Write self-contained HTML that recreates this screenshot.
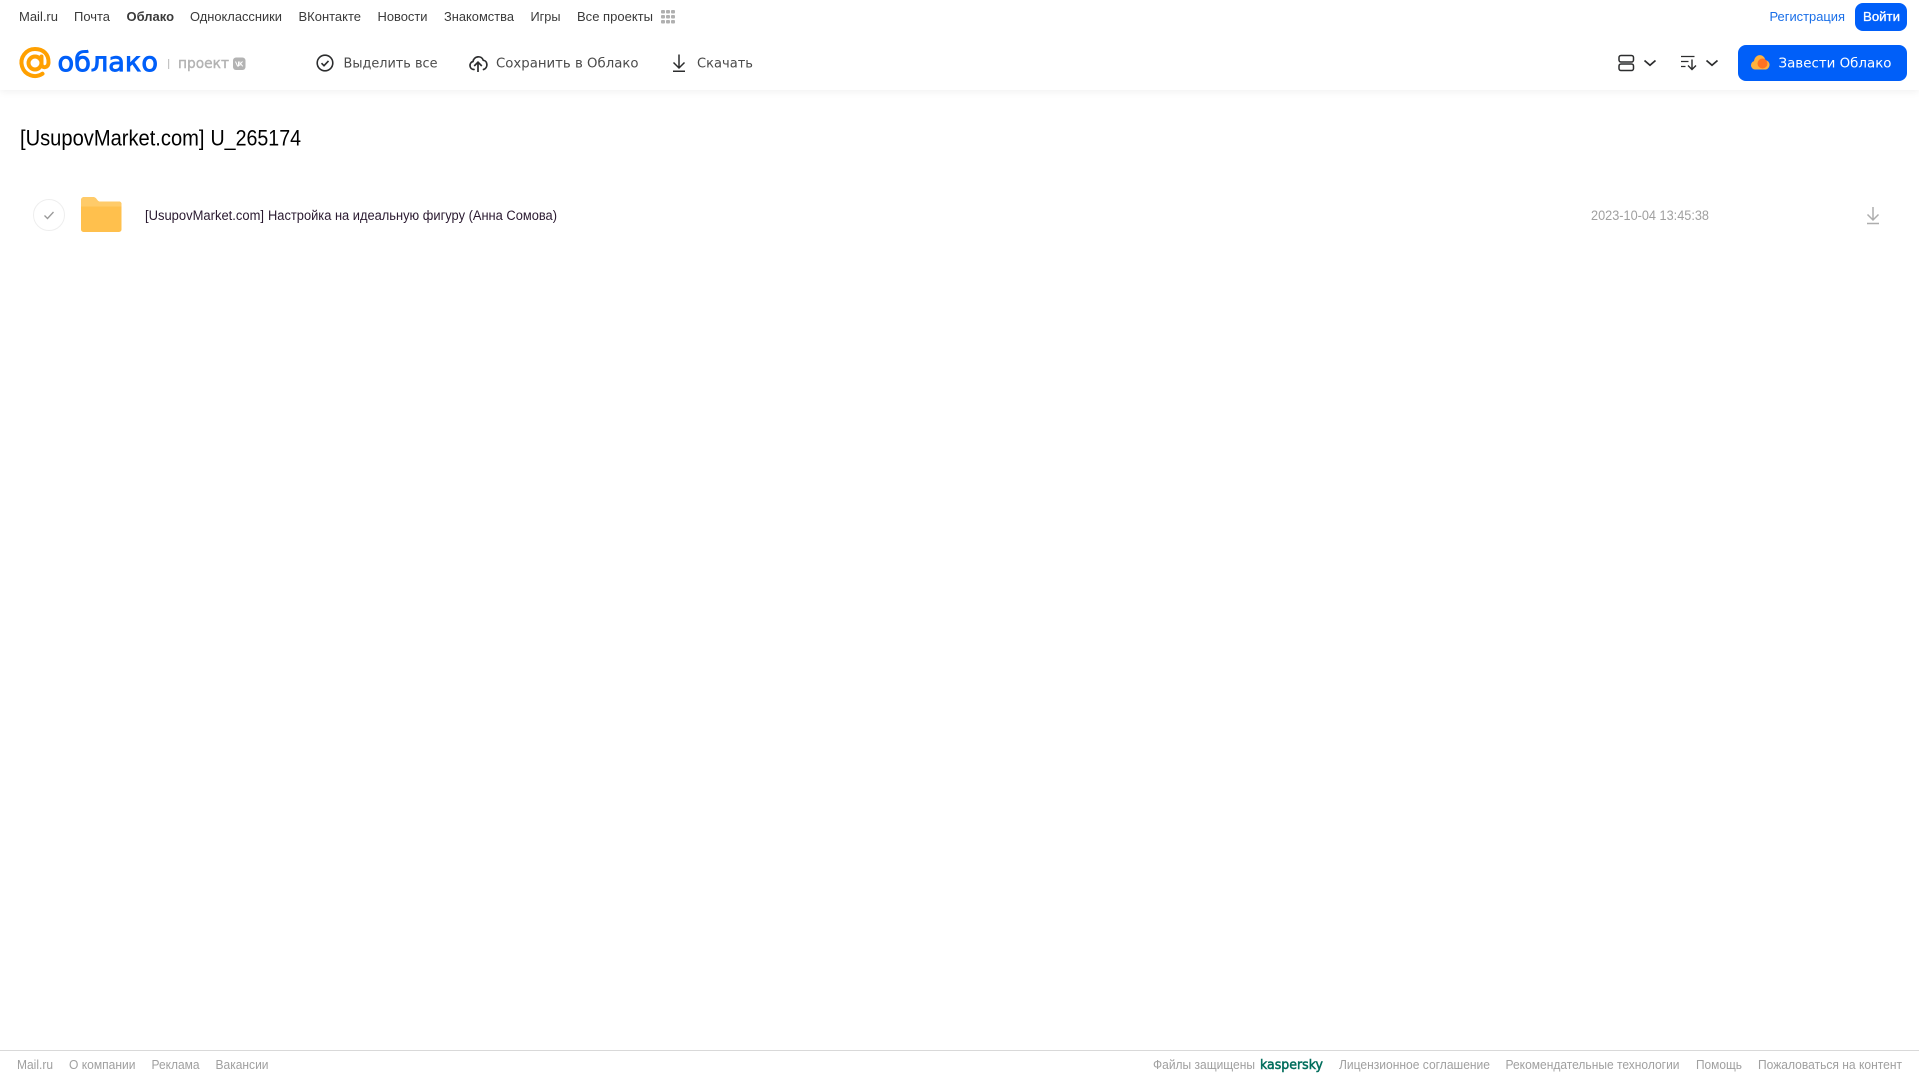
<!DOCTYPE html>
<html lang="ru">
<head>
<meta charset="utf-8">
<title>[UsupovMarket.com] U_265174 - Облако</title>
<style>
html,body{margin:0;padding:0;background:#fff;width:1919px;height:1079px;overflow:hidden}
body{position:relative;font-family:"Liberation Sans",Arial,sans-serif}
svg{display:block;position:absolute;left:0;top:0}
svg text{font-family:"Liberation Sans",Arial,sans-serif}
#hdr{position:absolute;left:0;top:0;width:1919px;height:90px;background:#fff;box-shadow:0 1px 8px rgba(0,0,0,.07)}
#ftr{position:absolute;left:0;top:1050px;width:1919px;height:29px;background:#fff;border-top:1px solid #d9d9d9;box-sizing:border-box}
main{position:absolute;left:0;top:0;width:1919px;height:1079px}
</style>
</head>
<body>
<main>
<svg width="1919" height="1079" viewBox="0 0 1919 1079">
<text x="20" y="145.500" font-size="22.500" fill="#000" textLength="184.500" lengthAdjust="spacingAndGlyphs">[UsupovMarket.com]</text>
<text x="210.500" y="145.500" font-size="22.500" fill="#000" textLength="90.500" lengthAdjust="spacingAndGlyphs">U_265174</text>
<circle cx="49" cy="215" r="15.500" fill="#fff" stroke="#eeeeee"/>
<path d="M44.500 215.500l3 3 6-6.500" fill="none" stroke="#999" stroke-width="1.300"/>
<path d="M81 200a3 3 0 0 1 3-3h8.500c2 0 3 .8 4 2.200l1 1.300c.6.8 1.200 1 2.200 1H119a2.500 2.500 0 0 1 2.500 2.500V229.500a2.500 2.500 0 0 1-2.500 2.500H83.500a2.500 2.500 0 0 1-2.500-2.500z" fill="#ffc04d"/>
<path d="M81 206.500h40.500v-2.500a2.500 2.500 0 0 0-2.500-2.500H100c-1 0-1.600-.2-2.200-1l-1-1.300c-1-1.400-2-2.200-4-2.200H84a3 3 0 0 0-3 3z" fill="#ffcb69"/>
<text x="145" y="220" font-size="13.500" fill="#2a1a30" textLength="119" lengthAdjust="spacingAndGlyphs">[UsupovMarket.com]</text>
<text x="268" y="220" font-size="13.500" fill="#2a1a30" textLength="289" lengthAdjust="spacingAndGlyphs">Настройка на идеальную фигуру (Анна Сомова)</text>
<text x="1591" y="220" font-size="13.500" fill="#a0a0a0" textLength="118" lengthAdjust="spacingAndGlyphs">2023-10-04 13:45:38</text>
<path d="M1873 207v13M1867.500 214.500l5.500 5.500 5.500-5.500M1867 223.500h12" fill="none" stroke="#adadad" stroke-width="1.500"/>
</svg>
</main>
<header id="hdr">
<svg width="1919" height="90" viewBox="0 0 1919 90">
<g font-size="13" fill="#3a3a3a">
<text x="19" y="21" textLength="39" lengthAdjust="spacingAndGlyphs">Mail.ru</text>
<text x="74" y="21" textLength="36" lengthAdjust="spacingAndGlyphs">Почта</text>
<text x="126.500" y="21" textLength="47.500" lengthAdjust="spacingAndGlyphs" font-weight="700">Облако</text>
<text x="190" y="21" textLength="92" lengthAdjust="spacingAndGlyphs">Одноклассники</text>
<text x="298.500" y="21" textLength="62.500" lengthAdjust="spacingAndGlyphs">ВКонтакте</text>
<text x="377.500" y="21" textLength="50" lengthAdjust="spacingAndGlyphs">Новости</text>
<text x="444" y="21" textLength="70" lengthAdjust="spacingAndGlyphs">Знакомства</text>
<text x="530.500" y="21" textLength="30" lengthAdjust="spacingAndGlyphs">Игры</text>
<text x="577" y="21" textLength="76" lengthAdjust="spacingAndGlyphs">Все проекты</text>
</g>
<g fill="#b0b0b0">
<rect x="661" y="10" width="4" height="3.500" rx="1"/><rect x="666" y="10" width="4" height="3.500" rx="1"/><rect x="671" y="10" width="4" height="3.500" rx="1"/>
<rect x="661" y="15" width="4" height="3.500" rx="1"/><rect x="666" y="15" width="4" height="3.500" rx="1"/><rect x="671" y="15" width="4" height="3.500" rx="1"/>
<rect x="661" y="20" width="4" height="3.500" rx="1"/><rect x="666" y="20" width="4" height="3.500" rx="1"/><rect x="671" y="20" width="4" height="3.500" rx="1"/>
</g>
<text x="1769.500" y="21" font-size="13" fill="#1a6fe8" textLength="75.500" lengthAdjust="spacingAndGlyphs">Регистрация</text>
<rect x="1855" y="3" width="52" height="28" rx="8" fill="#005ff9"/>
<text x="1863" y="21" font-size="13" fill="#fff" stroke="#fff" stroke-width=".3" textLength="37" lengthAdjust="spacingAndGlyphs">Войти</text>

<!-- logo -->
<circle cx="35" cy="63" r="6.500" fill="none" stroke="#ffa000" stroke-width="4"/>
<path d="M41.500 56.500v7.500c0 4.500 6.800 4.500 7-1.500.4-8.500-5.500-13.500-13.500-13.500a13.500 13.500 0 1 0 7.500 24.700" fill="none" stroke="#ffa000" stroke-width="4" stroke-linecap="round"/>
<text x="57.500" y="71" font-size="27" fill="#005ff9" stroke="#005ff9" stroke-width=".9" textLength="100.500" lengthAdjust="spacingAndGlyphs" style="font-family:'DejaVu Sans',sans-serif">облако</text>
<rect x="168" y="59" width="1.200" height="10" fill="#c4c4c4"/>
<text x="178" y="68" font-size="14" fill="#b3b3b3" stroke="#b3b3b3" stroke-width=".4" textLength="51" lengthAdjust="spacingAndGlyphs" style="font-family:'DejaVu Sans',sans-serif">проект</text>
<rect x="233" y="57.500" width="12.500" height="12.500" rx="3" fill="#b3b3b3"/>
<path d="M235.500 61.500l2 4.500h1v-4.500M242.500 61.500l-2 2.200 2.300 2.600M239.800 61.500v4.500" fill="none" stroke="#fff" stroke-width="1"/>

<!-- toolbar -->
<circle cx="325" cy="63" r="7.800" fill="none" stroke="#2c2d2e" stroke-width="1.600"/>
<path d="M321.500 63.200l2.500 2.500 4.500-4.800" fill="none" stroke="#2c2d2e" stroke-width="1.600"/>
<text x="343.500" y="67.500" font-size="13.500" fill="#4a4a4a" textLength="94" lengthAdjust="spacingAndGlyphs" style="font-family:'DejaVu Sans',sans-serif">Выделить все</text>
<path d="M474 69.500c-4.800 0-5.500-6.800-1-8 .8-5.500 8.500-6.500 10.300-1.200 4.300.3 5.200 7.700.2 9.200" fill="none" stroke="#2c2d2e" stroke-width="1.700" stroke-linecap="round" stroke-linejoin="round"/>
<path d="M478 72v-9.500M474.200 66l3.800-3.800 3.800 3.800" fill="none" stroke="#2c2d2e" stroke-width="1.700"/>
<text x="496" y="67.500" font-size="13.500" fill="#4a4a4a" textLength="142.500" lengthAdjust="spacingAndGlyphs" style="font-family:'DejaVu Sans',sans-serif">Сохранить в Облако</text>
<path d="M679 54.500v13.500M673.500 62.500l5.500 5.500 5.500-5.500M673 71.200h12" fill="none" stroke="#2c2d2e" stroke-width="1.500"/>
<text x="697" y="67.500" font-size="13.500" fill="#4a4a4a" textLength="56" lengthAdjust="spacingAndGlyphs" style="font-family:'DejaVu Sans',sans-serif">Скачать</text>

<!-- view controls -->
<rect x="1619" y="55.500" width="14.500" height="6.500" rx="2" fill="none" stroke="#2c2d2e" stroke-width="1.500"/>
<rect x="1619" y="64" width="14.500" height="6.500" rx="2" fill="none" stroke="#2c2d2e" stroke-width="1.500"/>
<path d="M1644.500 60.500l5.500 4.800 5.500-4.800" fill="none" stroke="#2c2d2e" stroke-width="1.700"/>
<path d="M1681 56.500h13.500M1681 61.500h7.500M1681 66.500h4.500" fill="none" stroke="#2c2d2e" stroke-width="1.300"/>
<path d="M1692 59.500v9.500M1688 65.500l4 4 4-4" fill="none" stroke="#2c2d2e" stroke-width="1.400"/>
<path d="M1706.500 60.500l5.500 4.800 5.500-4.800" fill="none" stroke="#2c2d2e" stroke-width="1.700"/>

<!-- CTA -->
<rect x="1738" y="45" width="169" height="36" rx="8" fill="#005ff9"/>
<path d="M1755 69.500a4.300 4.300 0 0 1-1-8.400c.5-3.600 3-6 5.800-6 3 0 5 2.200 5.500 5a4.800 4.800 0 0 1 .7 9.400z" fill="#ffb23e"/>
<circle cx="1762.500" cy="63.500" r="5" fill="#ff6a1f" opacity=".9"/>
<text x="1778.500" y="67.500" font-size="13.500" fill="#fff" textLength="113" lengthAdjust="spacingAndGlyphs" style="font-family:'DejaVu Sans',sans-serif">Завести Облако</text>
</svg>
</header>
<footer id="ftr">
<svg width="1919" height="29" viewBox="0 1050 1919 29">
<g font-size="12.500" fill="#a0a0a0">
<text x="17" y="1068" textLength="36" lengthAdjust="spacingAndGlyphs">Mail.ru</text>
<text x="69" y="1068" textLength="66.500" lengthAdjust="spacingAndGlyphs">О компании</text>
<text x="151.500" y="1068" textLength="48" lengthAdjust="spacingAndGlyphs">Реклама</text>
<text x="215.500" y="1068" textLength="53" lengthAdjust="spacingAndGlyphs">Вакансии</text>
<text x="1153" y="1068" textLength="102" lengthAdjust="spacingAndGlyphs">Файлы защищены</text>
<text x="1339" y="1068" textLength="151" lengthAdjust="spacingAndGlyphs">Лицензионное соглашение</text>
<text x="1505.500" y="1068" textLength="174" lengthAdjust="spacingAndGlyphs">Рекомендательные технологии</text>
<text x="1696" y="1068" textLength="46" lengthAdjust="spacingAndGlyphs">Помощь</text>
<text x="1758" y="1068" textLength="144" lengthAdjust="spacingAndGlyphs">Пожаловаться на контент</text>
</g>
<text x="1260" y="1068" font-size="13" fill="#006d5c" stroke="#006d5c" stroke-width=".5" textLength="63" lengthAdjust="spacingAndGlyphs" style="font-family:'DejaVu Sans',sans-serif">kaspersky</text>
</svg>
</footer>
</body>
</html>
